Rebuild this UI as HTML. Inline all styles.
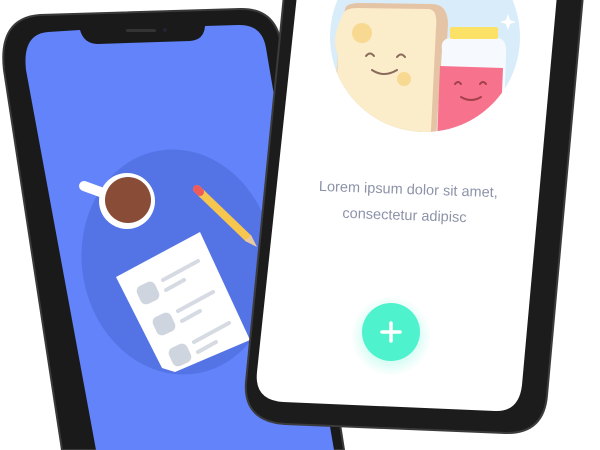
<!DOCTYPE html>
<html><head><meta charset="utf-8"><style>
html,body{margin:0;padding:0;background:#fff;width:600px;height:450px;overflow:hidden}
svg{display:block}
</style></head><body>
<svg width="600" height="450" viewBox="0 0 600 450" xmlns="http://www.w3.org/2000/svg">
<defs>
<clipPath id="ls"><path d="M48,32 L80,30 Q84,44 98,44 L190,41 Q204,40 205,26 L238,25 Q262,24 266,48 L334,450 L96,450 L26,70 Q22,34 48,32 Z"/></clipPath>
<clipPath id="circ"><circle cx="425" cy="37" r="95"/></clipPath>
<radialGradient id="glow"><stop offset="0.6" stop-color="#4ef2cc" stop-opacity="0.25"/><stop offset="1" stop-color="#4ef2cc" stop-opacity="0"/></radialGradient>
</defs>
<!-- left phone frame -->
<path d="M40,15 L240,9 Q278,8 282,50 L344,450 L62,450 L4,70 Q-2,18 40,15 Z" fill="#1a1a1a"/>
<path d="M40,15 L240,9 Q278,8 282,50 L344,450 L62,450 L4,70 Q-2,18 40,15 Z" fill="none" stroke="#3a3a3a" stroke-width="2"/>
<g clip-path="url(#ls)">
<rect x="0" y="0" width="400" height="450" fill="#6283fa"/>
<ellipse cx="178" cy="262" rx="96" ry="113" transform="rotate(-10 178 262)" fill="#5474e6"/>
<line x1="84" y1="186" x2="106" y2="194" stroke="#fff" stroke-width="10" stroke-linecap="round"/>
<circle cx="127" cy="201" r="28" fill="#fff"/>
<circle cx="128" cy="200" r="23" fill="#894c37"/>
<line x1="197" y1="189" x2="248" y2="238" stroke="#f7c64f" stroke-width="8" stroke-linecap="round"/>
<line x1="197" y1="189" x2="200" y2="192" stroke="#ef5a5a" stroke-width="8" stroke-linecap="round"/>
<polygon points="245,241 251,235 257,247" fill="#e9c9a0"/>
<polygon points="116,277 200,232 250,340 175,372 162,368" fill="#fff"/>
<g fill="#cfd5de">
<rect x="138" y="283" width="20" height="20" rx="6" transform="rotate(-25 148 293)"/>
<rect x="154" y="314" width="20" height="20" rx="6" transform="rotate(-25 164 324)"/>
<rect x="170" y="345" width="20" height="20" rx="6" transform="rotate(-25 180 355)"/>
</g>
<g stroke="#d6dbe3" stroke-width="4" stroke-linecap="round">
<line x1="163" y1="280" x2="198" y2="261"/><line x1="166" y1="290" x2="184" y2="280"/>
<line x1="178" y1="311" x2="213" y2="292"/><line x1="182" y1="321" x2="200" y2="311"/>
<line x1="194" y1="342" x2="229" y2="323"/><line x1="198" y1="352" x2="216" y2="342"/>
</g>
</g>
<rect x="126" y="29" width="30" height="3" rx="1.5" fill="#333"/>
<circle cx="165" cy="30" r="2" fill="#223"/>
<!-- right phone frame -->
<path d="M284,-5 L583,-5 L547,395 Q544,434 505,433 L285,424 Q243,421 246,382 Z" fill="#1c1c1c"/>
<path d="M284,-5 L583,-5 L547,395 Q544,434 505,433 L285,424 Q243,421 246,382 Z" fill="none" stroke="#3b3b3b" stroke-width="2"/>
<path d="M297,-5 L557,-5 L522,385 Q519,412 495,411 L283,402 Q254,400 257,372 Z" fill="#fff"/>
<circle cx="425" cy="37" r="95" fill="#d8edf9"/>
<g clip-path="url(#circ)">
<path d="M345,10 Q345,3 360,3 L432,4 Q448,4 448,25 L440,150 L330,150 L338,55 Q330,40 345,10 Z" fill="#e4c4a5"/>
<path d="M343,14 Q345,8 358,8 L428,9 Q438,9 436,28 L430,150 L334,150 L338,55 Q330,40 343,14 Z" fill="#fbecca"/>
<circle cx="362" cy="33" r="10" fill="#f8d991"/>
<circle cx="404" cy="79" r="7" fill="#f8d991"/>
<path d="M442,50 Q440,38 452,38 L497,38 Q507,38 506,55 L503,140 L436,140 Z" fill="#f6fafe"/>
<rect x="450" y="27" width="48" height="12" rx="2" fill="#fbe165"/>
<path d="M440,66 L503,68 L500,140 L437,140 Z" fill="#f7728d"/>
<g fill="none" stroke="#8a6a5a" stroke-width="2" stroke-linecap="round">
<path d="M366,56 q4,-5 8,0"/><path d="M397,57 q4,-5 8,0"/>
<path d="M372,70 q12,8 25,0"/>
</g>
<g fill="none" stroke="#a4404a" stroke-width="2" stroke-linecap="round">
<path d="M455,84 q3,-4 6,0"/><path d="M480,84 q3,-4 6,0"/>
<path d="M461,97 q10,6 20,0"/>
</g>
<path d="M508,14 l2,6 6,2 -6,2 -2,6 -2,-6 -6,-2 6,-2 z" fill="#fff"/>
</g>
<g transform="rotate(2 407 200)" font-family="Liberation Sans, sans-serif" font-size="14.5" fill="#8c93a8" text-anchor="middle">
<text x="408" y="194">Lorem ipsum dolor sit amet,</text>
<text x="405" y="220">consectetur adipisc</text>
</g>
<circle cx="391" cy="336" r="40" fill="url(#glow)"/>
<circle cx="391" cy="332" r="29" fill="#4ef2cc"/>
<g stroke="#fff" stroke-width="3.5" stroke-linecap="round">
<line x1="382" y1="332" x2="400" y2="332"/><line x1="391" y1="323" x2="391" y2="341"/>
</g>
</svg>
</body></html>
